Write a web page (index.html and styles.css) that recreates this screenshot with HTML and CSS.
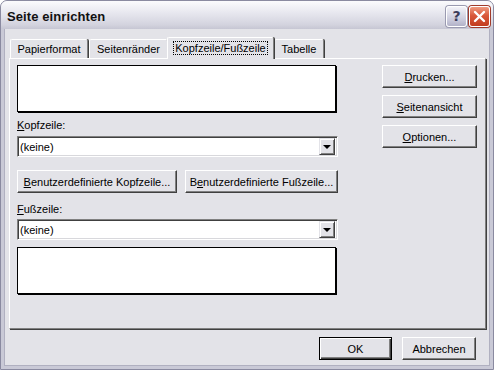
FILE: index.html
```html
<!DOCTYPE html>
<html lang="de">
<head>
  <meta charset="UTF-8">
  <title>Seite einrichten</title>
  <link rel="stylesheet" href="styles.css">
</head>
<body>
<div class="window">
  <div class="titlebar">
    <span class="title">Seite einrichten</span>
    <div class="capBtns">
      <span class="capBtn capHelp">?</span>
      <span class="capBtn capClose">
        <svg width="13" height="13" viewBox="0 0 13 13"><path d="M2 2 L11 11 M11 2 L2 11" stroke="#fff" stroke-width="2.4" stroke-linecap="round"/></svg>
      </span>
    </div>
  </div>
  <div class="client">
    <ul class="tabs">
      <li class="tab tab-paper">Papierformat</li>
      <li class="tab tab-margins">Seitenränder</li>
      <li class="tab tab-active"><span class="focus">Kopfzeile/Fußzeile</span></li>
      <li class="tab tab-table">Tabelle</li>
    </ul>
    <div class="panel">
      <div class="leftCol">
        <div class="preview"></div>
        <div class="label"><u>K</u>opfzeile:</div>
        <div class="combo">
          <span class="comboText">(keine)</span>
          <span class="comboArrow"><i></i></span>
        </div>
        <div class="btnRow">
          <button class="btn btnWide1"><u>B</u>enutzerdefinierte Kopfzeile...</button>
          <button class="btn btnWide2">B<u>e</u>nutzerdefinierte Fußzeile...</button>
        </div>
        <div class="label label2"><u>F</u>ußzeile:</div>
        <div class="combo combo2">
          <span class="comboText">(keine)</span>
          <span class="comboArrow"><i></i></span>
        </div>
        <div class="preview preview2"></div>
      </div>
      <div class="rightCol">
        <button class="btn btnSide"><u>D</u>rucken...</button>
        <button class="btn btnSide"><u>S</u>eitenansicht</button>
        <button class="btn btnSide"><u>O</u>ptionen...</button>
      </div>
    </div>
    <div class="footer">
      <button class="btn btnFoot btnDefault">OK</button>
      <button class="btn btnFoot">Abbrechen</button>
    </div>
  </div>
</div>
</body>
</html>
```

FILE: styles.css
```css
html, body, div, ul, li, span, button {padding:0; margin:0;}
ul {list-style:none;}
body {background:#fff; font-family:"Liberation Sans", Arial, sans-serif; font-size:11px; color:#000;}

.window {width:494px; height:370px; box-sizing:border-box; display:flex; flex-direction:column;
         background:#c9c9d6; border:1px solid #8a8aa0; border-radius:7px 7px 0 0; overflow:hidden;}
.titlebar {height:28px; flex:none; display:flex; align-items:center; justify-content:space-between;
           padding:0 3px 0 6px; background:linear-gradient(#fbfbfd, #e6e6ee 45%, #d3d3de 85%, #c6c6d3);}
.title {font-weight:bold; font-size:13px; letter-spacing:0.1px; color:#111; padding-top:2px;}
.capBtns {display:flex; gap:2px; padding-top:2px;}
.capBtn {width:19px; height:19px; border:1px solid #fff; border-radius:3px; display:flex; align-items:center;
         justify-content:center; box-shadow:0 0 0 1px #9a9ab0;}
.capHelp {background:linear-gradient(#f2f2f8, #c8c8da 70%, #b2b2c8); color:#3c3c5a; font-weight:bold;
          font-size:14px; font-family:"DejaVu Sans", sans-serif;}
.capClose {background:linear-gradient(#ee9a80, #d9583a 45%, #c23c1e); box-shadow:0 0 0 1px #a03a2a;}

.client {flex:1; margin:0 3px 3px 3px; background:#e3e3e8; display:flex; flex-direction:column;
         border:1px solid #b0b0c0; border-top:none;}

.tabs {display:flex; align-items:flex-end; height:29px; padding-left:5px; box-sizing:border-box;}
.tab {height:19px; line-height:19px; box-sizing:border-box; text-align:center; border-top:1px solid #fff;
      border-left:1px solid #fff; border-right:1px solid #808080; border-radius:2px 2px 0 0;
      box-shadow:1px 0 0 #404040; margin-right:1px; background:#e3e3e8; white-space:nowrap;}
.tab-paper {width:78px;}
.tab-margins {width:79px;}
.tab-table {width:50px;}
.tab-active {width:107px; height:22px; line-height:20px; margin:0 0 -1px -2px; position:relative; z-index:1;
             padding-bottom:1px;}
.tab-active + .tab {margin-left:0;}
.focus {border:1px dotted #000; padding:0 1px;}

.panel {display:flex; width:477px; height:271px; box-sizing:border-box; margin-left:4px;
        border:1px solid; border-color:#fff #808080 #808080 #fff; box-shadow:1px 1px 0 #404040;
        padding:6px 0 0 7px;}
.leftCol {width:321px; display:flex; flex-direction:column;}
.rightCol {display:flex; flex-direction:column; gap:7px; margin-left:44px;}

.preview {height:47px; background:#fff; border:1px solid #000; box-sizing:border-box;
          box-shadow:1px 1px 0 #000; width:319px;}
.preview2 {margin-top:7px;}
.label {height:14px; line-height:14px; margin-top:6px;}
.label2 {margin-top:9px;}

.combo {height:21px; width:321px; box-sizing:border-box; margin-top:4px; display:flex; align-items:center;
        background:#fff; border:1px solid; border-color:#808080 #fff #fff #808080;
        box-shadow:inset 1px 1px 0 #404040, inset -1px -1px 0 #d8d8dc; padding:2px 2px 2px 2px;}
.combo2 {margin-top:3px;}
.comboText {flex:1;}
.comboArrow {width:16px; height:17px; box-sizing:border-box; background:#e3e3e8; display:flex;
             align-items:center; justify-content:center; border:1px solid; border-color:#e3e3e8 #404040 #404040 #e3e3e8;
             box-shadow:inset 1px 1px 0 #fff, inset -1px -1px 0 #808080;}
.comboArrow i {width:0; height:0; border-left:4px solid transparent; border-right:4px solid transparent;
               border-top:4px solid #000; margin-top:1px;}

.btn {font-family:inherit; font-size:11px; color:#000; background:#e3e3e8; height:23px; box-sizing:border-box;
      border:1px solid; border-color:#fff #404040 #404040 #fff; box-shadow:inset -1px -1px 0 #808080;
      padding:0; white-space:nowrap;}
.btnRow {display:flex; justify-content:space-between; margin-top:13px;}
.btnWide1 {width:160px;}
.btnWide2 {width:153px;}
.btnSide {width:95px;}

.footer {display:flex; justify-content:flex-end; gap:10px; padding:8px 13px 0 0;}
.btnFoot {width:74px;}
.btnDefault {width:73px; border:1px solid #000; box-shadow:inset 1px 1px 0 #fff, inset -1px -1px 0 #404040, inset -2px -2px 0 #808080;}
```
